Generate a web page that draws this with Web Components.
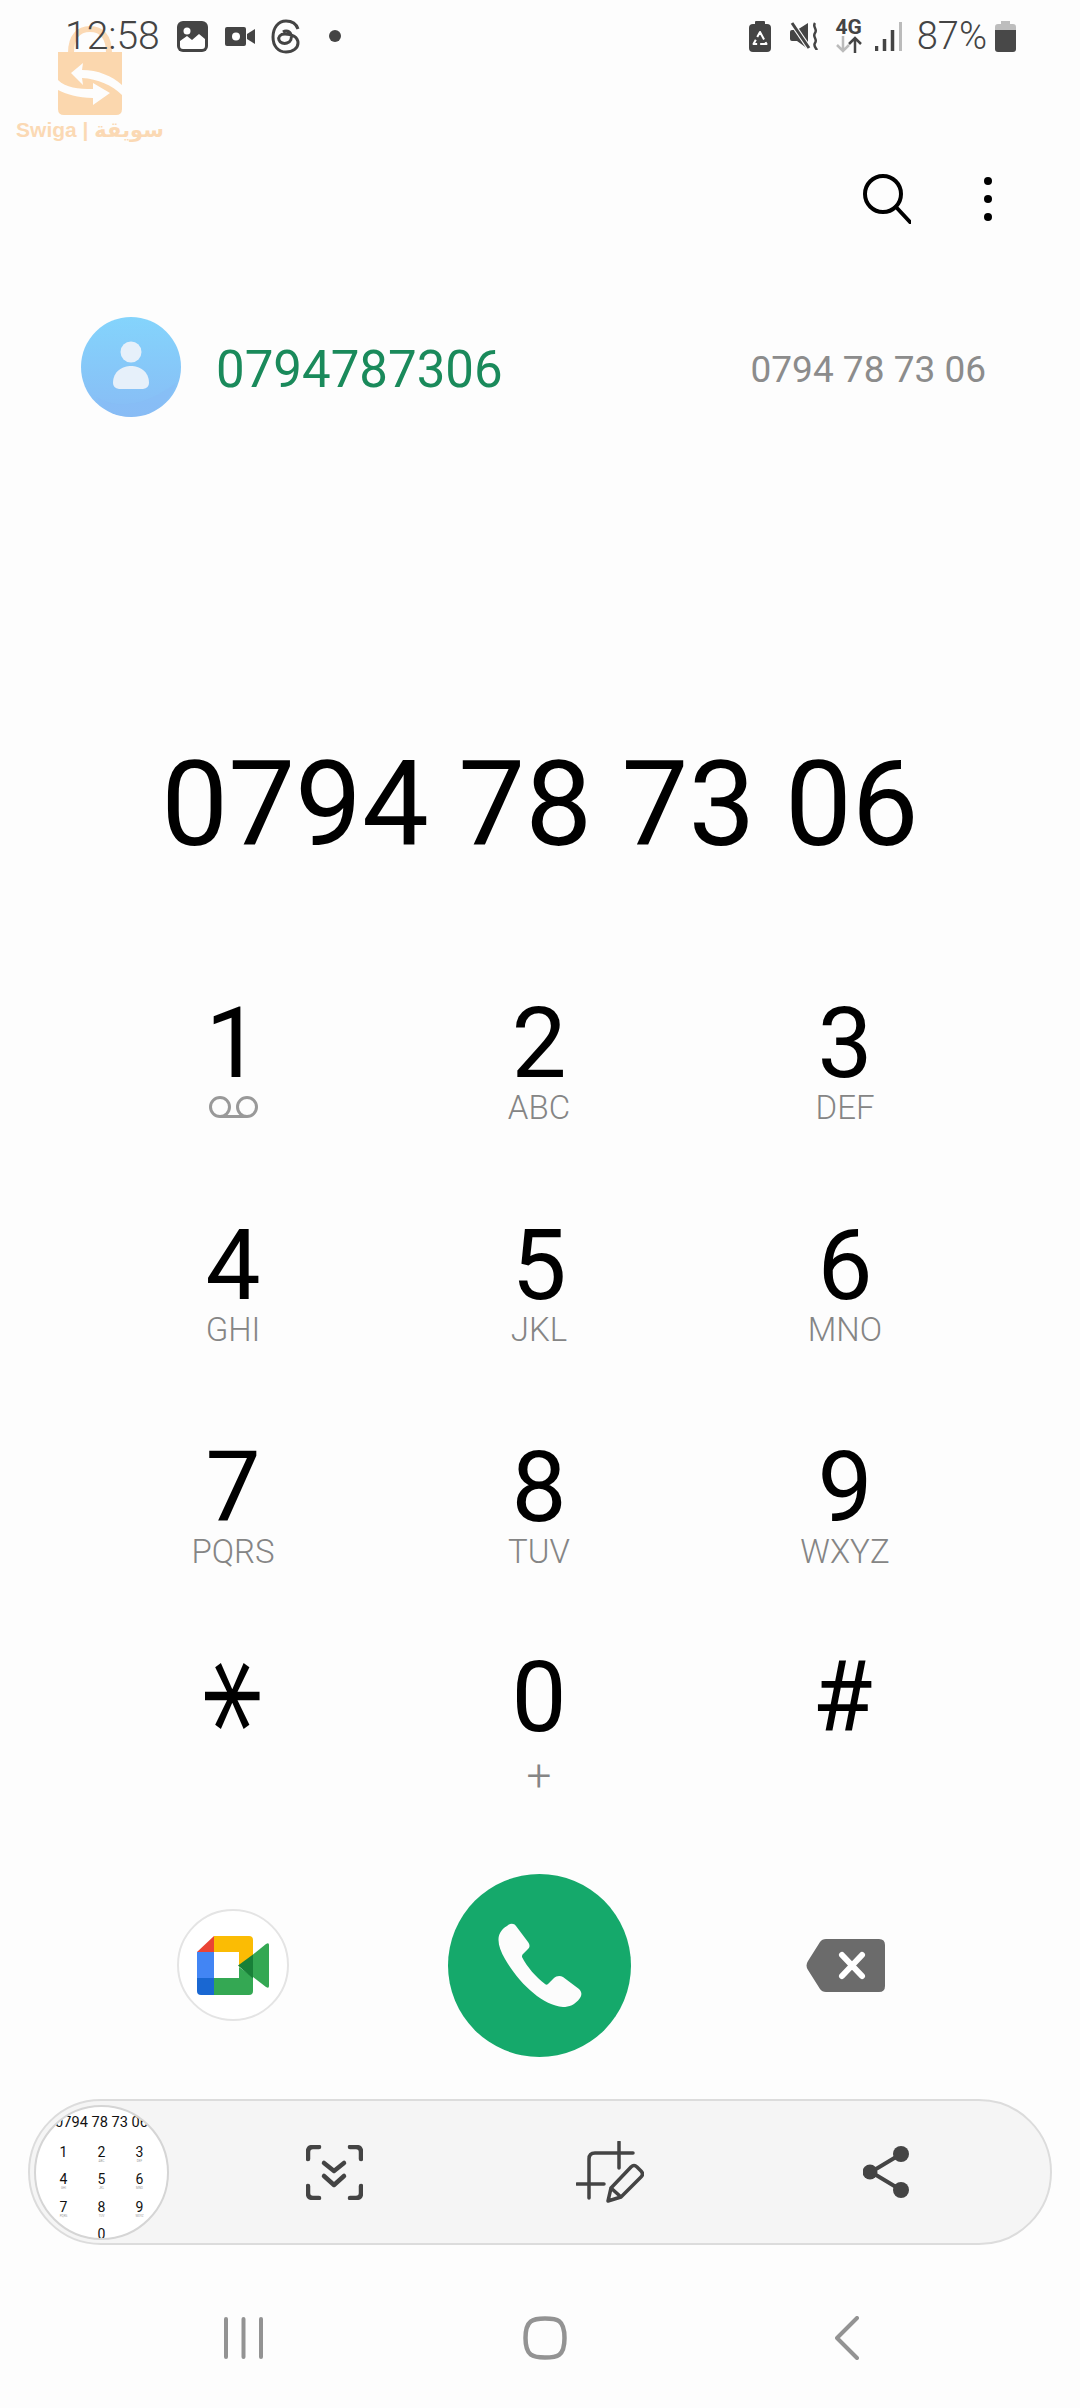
<!DOCTYPE html>
<html>
<head>
<meta charset="utf-8">
<title>Phone</title>
<style>
  html, body { margin: 0; background: #fdfdfd; }
  body { font-family: Roboto, sans-serif; }
  dial-key .plus { margin-top: 28px; font-size: 44px; }
  dial-key .voicemail { margin-top: 6px; }
  dial-key .hash { margin-right: 5px; }
  dial-key .star-glyph { display: inline-block; font-family: "DejaVu Sans", sans-serif; font-size: 150px; line-height: 100px; transform: translate(-21px, -2px) rotate(90deg) scale(1, .8); }
</style>
</head>
<body>
<dialer-app>
  <swiga-mark></swiga-mark>
  <status-bar></status-bar>
  <dial-toolbar></dial-toolbar>
  <contact-match number="0794787306" formatted="0794 78 73 06"></contact-match>
  <number-display>0794 78 73 06</number-display>
  <dial-pad>
    <dial-key>1<svg slot="sub" class="voicemail" width="49" height="22" viewBox="0 0 49 22" fill="none" stroke="#999" stroke-width="3"><circle cx="11" cy="11" r="9.5"/><circle cx="38" cy="11" r="9.5"/><path d="M11 20.5h27"/></svg></dial-key>
    <dial-key>2<span slot="sub">ABC</span></dial-key>
    <dial-key>3<span slot="sub">DEF</span></dial-key>
    <dial-key>4<span slot="sub">GHI</span></dial-key>
    <dial-key>5<span slot="sub">JKL</span></dial-key>
    <dial-key>6<span slot="sub">MNO</span></dial-key>
    <dial-key>7<span slot="sub">PQRS</span></dial-key>
    <dial-key>8<span slot="sub">TUV</span></dial-key>
    <dial-key>9<span slot="sub">WXYZ</span></dial-key>
    <dial-key><span class="star-glyph">*</span></dial-key>
    <dial-key>0<span slot="sub" class="plus">+</span></dial-key>
    <dial-key><span class="hash">#</span></dial-key>
  </dial-pad>
  <call-actions></call-actions>
  <capture-bar><mini-dialer slot="thumb"></mini-dialer></capture-bar>
  <nav-bar></nav-bar>
</dialer-app>

<script>
const define = (name, html) => {
    customElements.define(name, class extends HTMLElement {
        constructor() {
            super();
            this.attachShadow({ mode: 'open' }).innerHTML = html;
        }
    });
};

define('dialer-app', `
<style>
  :host { display: flex; flex-direction: column; position: relative; width: 1080px; height: 2408px; overflow: hidden; background: #fdfdfd; }
</style>
<slot></slot>`);

define('swiga-mark', `
<style>
  :host { position: absolute; left: 8px; top: 26px; width: 164px; display: flex; flex-direction: column; align-items: center; }
  svg { display: block; }
  span { margin-top: 2px; font: bold 21px/26px "Liberation Sans", "DejaVu Sans", sans-serif; color: #fbd9b4; white-space: nowrap; }
</style>
<svg width="64" height="89" viewBox="0 0 64 89">
  <path d="M13 27C13 10 21 3 32 3s19 7 19 24" fill="none" stroke="#fbd9b4" stroke-width="6"/>
  <path d="M0 26h64v57q0 6-6 6H6q-6 0-6-6z" fill="#fbd7ae"/>
  <g transform="translate(0 26)" fill="#fdfdfd">
    <path d="M13 21L25 11l-1 7c16 0 30 6 40 15v10C54 33 40 27 24 26l1 7z"/>
    <path d="M0 28c8 8 20 9 35 9v-6l17 10-17 12v-7C20 46 8 42 0 38z"/>
  </g>
</svg>
<span>Swiga | سويقة</span>`);

define('status-bar', `
<style>
  :host { display: flex; align-items: center; position: relative; height: 72px; padding: 0 64px 0 65px; color: #444; font-size: 38px; font-weight: 300; }
  svg { display: block; flex: none; }
  .left, .right { display: flex; align-items: center; }
  .right { margin-left: auto; }
  .time { font-size: 39px; }
  .net { display: flex; flex-direction: column; align-items: center; font: bold 21px/17px Roboto, sans-serif; margin: 0 13px 0 16px; }
</style>
<div class="left">
  <span class="time">12:58</span>
  <svg style="margin-left:17px" width="31" height="31" viewBox="0 0 31 31"><rect width="31" height="31" rx="6" fill="#444"/><circle cx="10" cy="10" r="3.5" fill="#fff"/><path d="M3 20l7-5 5 4 7-6 6 5v7q0 3-3 3H6q-3 0-3-3z" fill="#fff"/></svg>
  <svg style="margin-left:17px" width="30" height="19" viewBox="0 0 30 19"><rect width="21" height="19" rx="2" fill="#444"/><circle cx="11" cy="9.5" r="4" fill="#fff"/><path d="M22 7l8-5v15l-8-5z" fill="#444"/></svg>
  <svg style="margin-left:16px" width="30" height="35" viewBox="0 0 30 35" fill="none" stroke="#444" stroke-width="3"><path d="M27 10C25 4 20 2 15 2 7 2 2 9 2 18c0 9 5 15 13 15 7 0 12-4 12-9 0-6-6-9-13-9-5 0-7 3-6 6 1 3 5 4 8 3 4-1 5-5 4-8-1-4-5-5-8-3"/></svg>
  <svg style="margin-left:28px" width="12" height="12" viewBox="0 0 12 12"><circle cx="6" cy="6" r="6" fill="#444"/></svg>
</div>
<div class="right">
  <svg width="22" height="31" viewBox="0 0 22 31"><rect x="6" width="10" height="5" rx="1" fill="#444"/><rect y="3" width="22" height="28" rx="4" fill="#444"/><path d="M11 11l6.500 12H4.500z" fill="none" stroke="#fff" stroke-width="2" stroke-dasharray="8.500 3" stroke-linejoin="round"/></svg>
  <svg style="margin-left:19px" width="29" height="28" viewBox="0 0 29 28"><path d="M0 10q0-2 2-2h5l11-7v26L7 19H2q-2 0-2-2z" fill="#444"/><path d="M2 1l17 25" stroke="#fdfdfd" stroke-width="5"/><path d="M2 1l17 25" stroke="#444" stroke-width="3"/><path d="M25 1c-3 4 3 6 0 10s3 6 0 10c-2 3 1 5 2 7" fill="none" stroke="#444" stroke-width="2.500"/></svg>
  <div class="net">4G<svg width="26" height="17" viewBox="0 0 26 17" fill="none" stroke-width="2.500"><path d="M7 0v15M1 9l6 6 6-6" stroke="#bbb"/><path d="M19 17V2M13 8l6-6 6 6" stroke="#444"/></svg></div>
  <svg width="27" height="29" viewBox="0 0 27 29"><path d="M1.500 24v5M9.500 17v12M17.500 8v21" stroke="#444" stroke-width="3.500"/><path d="M25.500 0v29" stroke="#bbb" stroke-width="3"/></svg>
  <span style="margin-left:15px">87%</span>
  <svg style="margin-left:8px" width="21" height="31" viewBox="0 0 21 31"><path d="M6 0h9v3h3q3 0 3 3v5H0V6q0-3 3-3h3z" fill="#bdbdbd"/><path d="M0 9h21v19q0 3-3 3H3q-3 0-3-3z" fill="#484848"/></svg>
</div>`);

define('dial-toolbar', `
<style>
  :host { display: flex; justify-content: flex-end; align-items: center; gap: 73px; height: 90px; margin-top: 82px; padding-right: 88px; }
  svg { display: block; }
</style>
<svg width="48" height="50" viewBox="0 0 48 50" fill="none" stroke="#000" stroke-width="4"><circle cx="20" cy="20" r="18"/><path d="M33 33l14 15" stroke-linecap="round"/></svg>
<svg width="8" height="44" viewBox="0 0 8 44"><circle cx="4" cy="4" r="4"/><circle cx="4" cy="22" r="4"/><circle cx="4" cy="40" r="4"/></svg>`);

customElements.define('contact-match', class extends HTMLElement {
    constructor() {
        super();
        this.attachShadow({ mode: 'open' }).innerHTML = `
<style>
  :host { display: flex; align-items: center; height: 110px; margin-top: 68px; padding: 0 94px 0 81px; }
  svg { display: block; flex: none; }
  span { padding-top: 4px; }
  .name { margin-left: 35px; font-size: 51px; color: #1a8a5b; }
  .num { margin-left: auto; font-size: 37px; color: #8c8c8c; }
</style>
<svg width="100" height="100" viewBox="0 0 100 100">
  <defs><linearGradient id="av" x1="0" y1="0" x2="0" y2="1"><stop offset="0" stop-color="#84d4fc"/><stop offset="1" stop-color="#88bcf5"/></linearGradient></defs>
  <circle cx="50" cy="50" r="50" fill="url(#av)"/>
  <path d="M15 80Q50 100 95 66 85 95 50 100 28 100 15 80z" fill="#88bcf5" opacity=".5"/>
  <circle cx="50" cy="35" r="10.500" fill="#e6f0fa"/>
  <path d="M32 66c0-12 10-17 18-17s18 5 18 17q0 5-6 6H38q-6-1-6-6z" fill="#e6f0fa"/>
</svg>
<span class="name"></span><span class="num"></span>`;
    }

    connectedCallback() {
        this.shadowRoot.querySelector('.name').textContent = this.getAttribute('number');
        this.shadowRoot.querySelector('.num').textContent = this.getAttribute('formatted');
    }
});

define('number-display', `
<style>
  :host { display: block; height: 160px; margin-top: 303px; text-align: center; font-size: 119px; line-height: 160px; color: #000; }
</style>
<slot></slot>`);

define('dial-pad', `
<style>
  :host { display: grid; grid-template-columns: repeat(3, 306px); grid-template-rows: 222px 222px 210px 334px; padding: 0 80px; height: 988px; }
</style>
<slot></slot>`);

define('dial-key', `
<style>
  :host { display: flex; flex-direction: column; align-items: center; padding-top: 109px; box-sizing: border-box; font-size: 98px; line-height: 100px; color: #000; }
  .digit { height: 96px; display: block; }
  .sub { display: flex; align-items: center; justify-content: center; height: 36px; font-size: 33px; font-weight: 300; line-height: 36px; color: #858585; }
</style>
<span class="digit"><slot></slot></span>
<span class="sub"><slot name="sub"></slot></span>`);

define('call-actions', `
<style>
  :host { display: grid; grid-template-columns: repeat(3, 306px); justify-items: center; align-items: center; height: 184px; padding: 0 80px; }
  svg { display: block; }
  .meet { display: flex; align-items: center; justify-content: center; width: 112px; height: 112px; box-sizing: border-box; border: 2px solid #e4e4e4; border-radius: 50%; background: #fff; }
  .call { display: flex; align-items: center; justify-content: center; width: 183px; height: 183px; border-radius: 50%; background: #15a96b; }
</style>
<div class="meet">
  <svg width="72" height="59" viewBox="0 0 72 59">
    <path d="M17 0L0 16h17z" fill="#ea4335"/>
    <path d="M0 16h17v26H0z" fill="#4285f4"/>
    <path d="M0 42h17v17H4q-4 0-4-4z" fill="#1967d2"/>
    <path d="M17 0h35q4 0 4 4v17L42 31V16H17z" fill="#fbbc04"/>
    <path d="M17 42h25V31l14 10v14q0 4-4 4H17z" fill="#34a853"/>
    <path d="M41 29.500l15-11v24z" fill="#188038"/>
    <path d="M56 18.500L69 8q3-2 3 1v41q0 3-3 1L56 41z" fill="#34a853"/>
  </svg>
</div>
<div class="call">
  <svg width="85" height="84" viewBox="0 0 85 84"><path d="M10 3c3-3 7-3 9 0l12 16c2 3 2 5 0 7l-5 5c-1 1-1 2-1 3 5 10 14 20 23 27 1 1 2 1 3 0l6-6c2-2 6-3 9-1l16 12c3 3 3 6 1 9-5 7-11 9-17 9C45 82 22 60 8 36 0 22-2 10 10 3z" fill="#fcfcfc"/></svg>
</div>
<svg width="79" height="53" viewBox="0 0 79 53"><path d="M2 22L14 3q2-3 6-3h53q6 0 6 6v41q0 6-6 6H20q-4 0-6-3L2 31q-3-4.500 0-9z" fill="#6b6b6b"/><path d="M36 16l20 21M56 16L36 37" stroke="#fff" stroke-width="6" stroke-linecap="round"/></svg>`);

define('capture-bar', `
<style>
  :host { display: grid; grid-template-columns: 162px repeat(3, 276px); justify-items: center; align-items: center; box-sizing: border-box; height: 146px; margin: 42px 28px 0; padding-left: 4px; border: 2px solid #dcdcdc; border-radius: 73px; background: #f5f5f5; }
  svg { display: block; }
  ::slotted(mini-dialer) { justify-self: start; }
</style>
<slot name="thumb"></slot>
<svg width="57" height="55" viewBox="0 0 57 55" fill="none" stroke="#444" stroke-width="4.500" stroke-linecap="round" stroke-linejoin="round"><path d="M2 14V7q0-5 5-5h6M44 2h6q5 0 5 5v7M2 41v7q0 5 5 5h6M44 53h6q5 0 5-5v-7"/><path d="M18 18l10 8 10-8M18 31l10 9 10-9"/></svg>
<svg width="68" height="62" viewBox="0 0 68 62" fill="none" stroke="#444" stroke-width="3.500" stroke-linecap="round" stroke-linejoin="round"><path d="M13 57V18q0-6 6-6h38M43 1v26M1 43h27"/><path d="M32 60l3-13 20-21q3-3 6 0l4 4q3 3 0 6L45 56zM35 47l10 9"/></svg>
<svg width="46" height="52" viewBox="0 0 46 52"><path d="M38 8L8 26l30 18" fill="none" stroke="#444" stroke-width="4"/><circle cx="38" cy="8" r="8" fill="#444"/><circle cx="7" cy="26" r="7.500" fill="#444"/><circle cx="38" cy="44" r="8" fill="#444"/></svg>`);

define('mini-dialer', `
<style>
  :host { display: block; position: relative; width: 135px; height: 135px; box-sizing: border-box; border: 2px solid #d5d5d5; border-radius: 50%; background: #fff; overflow: hidden; color: #111; }
  .num { margin-top: 6px; text-align: center; font-size: 14.600px; line-height: 18px; white-space: nowrap; }
  .grid { display: grid; grid-template-columns: repeat(3, 38px); grid-auto-rows: 27.500px; justify-content: center; margin-top: 14px; text-align: center; font-size: 14px; line-height: 14px; }
  small { display: block; font-size: 3px; line-height: 4px; color: #999; }
</style>
<div class="num">0794 78 73 06</div>
<div class="grid">
  <span>1</span><span>2<small>ABC</small></span><span>3<small>DEF</small></span>
  <span>4<small>GHI</small></span><span>5<small>JKL</small></span><span>6<small>MNO</small></span>
  <span>7<small>PQRS</small></span><span>8<small>TUV</small></span><span>9<small>WXYZ</small></span>
  <span></span><span>0</span><span></span>
</div>`);

define('nav-bar', `
<style>
  :host { display: grid; grid-template-columns: repeat(3, 302px); justify-items: center; align-items: center; height: 88px; margin-top: 49px; padding-left: 92px; }
  svg { display: block; }
</style>
<svg width="39" height="42" viewBox="0 0 39 42" stroke="#939393" stroke-width="4" stroke-linecap="round"><path d="M2 2v38M19.500 2v38M37 2v38"/></svg>
<svg width="44" height="44" viewBox="0 0 44 44" fill="none" stroke="#939393" stroke-width="4.500"><path d="M22 2.500c12 0 19.500 1 19.500 19.500S34 41.500 22 41.500 2.500 40 2.500 22 10 2.500 22 2.500z"/></svg>
<svg width="24" height="44" viewBox="0 0 24 44" fill="none" stroke="#939393" stroke-width="4" stroke-linecap="round" stroke-linejoin="round"><path d="M22 2L2 22l20 20"/></svg>`);
</script>
</body>
</html>
